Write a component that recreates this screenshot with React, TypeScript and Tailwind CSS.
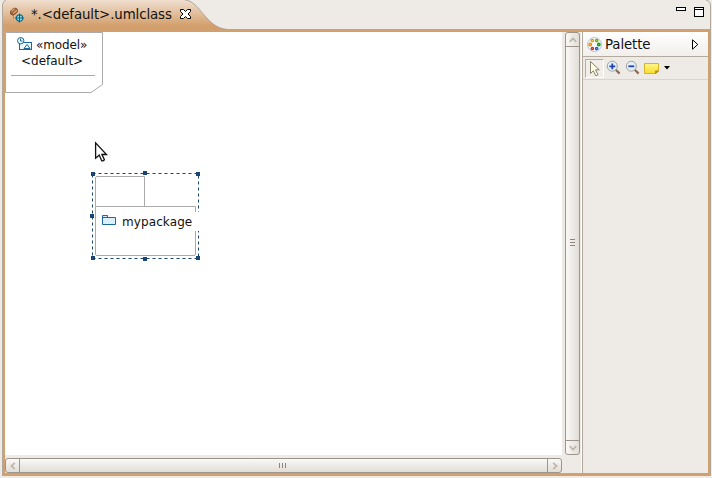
import React from "react";

function Chevron({ className = "" }: { className?: string }) {
  return (
    <svg className={className} width="8" height="8" viewBox="0 0 8 8" fill="none" stroke="#c0b7ac" strokeWidth="1.8">
      <path d="M.8 5.8 4 2.4 7.2 5.8" />
    </svg>
  );
}

function EditorIcon() {
  return (
    <svg width="16" height="16" viewBox="0 0 16 16" className="mt-[7px] shrink-0">
      <path d="M3.5 7V12" stroke="#b98a5e" />
      <ellipse cx="3.9" cy="4.6" rx="4.1" ry="2.8" transform="rotate(-38 3.9 4.6)" fill="#a9663a" stroke="#7d4925" strokeWidth=".8" />
      <path d="M1.6 4.2 4.6 1.6M3.4 6.4 7 3.2" stroke="#e3b088" strokeWidth="1.1" />
      <circle cx="9.5" cy="11" r="3.2" fill="#9fe0ea" stroke="#0a6f8a" strokeWidth="1.2" />
      <path d="M9.5 6.6v9M5 11h9" stroke="#0a6580" strokeWidth="1.1" />
    </svg>
  );
}

function Header() {
  return (
    <header className="relative flex h-[32px] w-full shrink-0">
      <svg className="absolute inset-0" width="712" height="32" viewBox="0 0 712 32">
        <defs>
          <linearGradient id="tab" x1="0" y1="0" x2="0" y2="1">
            <stop offset="0" stopColor="#f0dfd0" />
            <stop offset=".8" stopColor="#d3a06d" />
            <stop offset="1" stopColor="#d3a06d" />
          </linearGradient>
        </defs>
        <path d="M3 32V5Q3 1 7 0H186C199 1 207 28 227 29V32Z" fill="url(#tab)" />
        <path d="M2.5 32V5Q3 1 6 0M185 0C200 1 206 28 227 29.5H711" fill="none" stroke="#b1a79a" />
        <path d="M706 0Q710.5 1 710.5 6V32" fill="none" stroke="#b1a79a" />
        <path d="M3 30H710V32H3Z" fill="#d3a06d" />
      </svg>
      <div className="relative flex w-full pl-[10px]">
        <EditorIcon />
        <span className="ml-[5px] mt-[5px] w-[142px] whitespace-nowrap text-[13.33px] leading-[20px] tracking-[-0.09px]">*.&lt;default&gt;.umlclass</span>
        <svg width="11" height="10" viewBox="0 0 11 10" className="ml-[7px] mt-[9px] shrink-0">
          <path d="M.5.5h3l2 2 2-2h3v2l-2.5 2.5 2.5 2.5v2h-3l-2-2-2 2h-3v-2L3 5 .5 2.5Z" fill="white" stroke="black" />
        </svg>
        <div className="ml-auto mr-[8px] flex gap-[8px] pt-[7px]">
          <div className="h-[4px] w-[10px] border border-black bg-white" />
          <div className="h-[10px] w-[10px] border border-black bg-white pt-px">
            <div className="h-px bg-black" />
          </div>
        </div>
      </div>
    </header>
  );
}

function Canvas() {
  return (
    <main className="relative h-[423px] w-[557px] shrink-0 overflow-hidden bg-white">
      <svg className="absolute inset-0" width="557" height="423" viewBox="5 32 557 423">
        <path d="M5.5 32.5H102.5V84.5L91 92.5H5.5ZM11 75.5H95" fill="white" stroke="#aaa" />
        <g transform="translate(17 37)" fill="none" stroke="#1d6898">
          <rect x="2.5" y="5.5" width="12" height="7" fill="#edf8fc" />
          <circle cx="3.7" cy="3.7" r="3.2" fill="#edf8fc" />
          <path d="M3.5 1.5v2.5h2M7 11.5h6L10 7.5Z" />
        </g>
        <rect x="92.5" y="173.5" width="106" height="85" fill="none" stroke="#174575" strokeDasharray="3 3" />
        <path d="M95.5 206.5V178Q95.5 176.5 97 176.5H144.5V206.5M95.5 206.5H195.5V254Q195.5 255.5 194 255.5H97Q95.5 255.5 95.5 254V206.5" fill="white" stroke="#aaa" />
        <rect x="97" y="212" width="103" height="19" fill="white" />
        <path d="M102.5 224.5v-9h5v2h8v7Z" fill="#dceefa" stroke="#1d6898" />
        <path d="M103 217.5h5" stroke="#1d6898" />
        <path d="M91 172h4v4h-4ZM143 171h4v4h-4ZM196 172h4v4h-4ZM90 214h4v4h-4ZM91 256h4v4h-4ZM143 257h4v4h-4ZM196 256h4v4h-4Z" fill="#174575" />
        <path d="M96.3 144v15.5l3.7-3.3 2.6 5.6 3-1.4-2.6-5.4h4.6Z" fill="#bbb" opacity=".5" />
        <path d="M95.6 142.8v15.4l3.6-3.1 2.5 5.7q1.6.4 2.7-1.2l-2.5-5.1h4.6Z" fill="white" stroke="#111" strokeWidth="1.3" />
      </svg>
      <div className="absolute left-[31px] top-[5px] text-[12px] leading-[16px] tracking-[-0.12px]">«model»</div>
      <div className="absolute left-[16px] top-[21px] text-[12px] leading-[16px] tracking-[-0.02px]">&lt;default&gt;</div>
      <div className="absolute left-[117px] top-[182px] text-[12px] leading-[16px] tracking-[0.1px]">mypackage</div>
    </main>
  );
}

function VerticalScroll() {
  return (
    <div className="flex h-[423px] w-[15px] flex-col overflow-hidden rounded-[3px] border border-[#9d958c] bg-gradient-to-r from-[#faf9f7] to-[#e2ddd7]">
      <div className="flex h-[14px] shrink-0 items-center justify-center border-b border-[#9d958c]"><Chevron /></div>
      <div className="flex flex-1 flex-col items-center justify-center gap-[2px] pb-[2px]">
        <i className="h-px w-[5px] bg-[#8d857c]" /><i className="h-px w-[5px] bg-[#8d857c]" /><i className="h-px w-[5px] bg-[#8d857c]" />
      </div>
      <div className="flex h-[14px] shrink-0 items-center justify-center border-t border-[#9d958c]"><Chevron className="rotate-180" /></div>
    </div>
  );
}

function HorizontalScroll() {
  return (
    <div className="mt-[3px] flex h-[15px] w-[557px] overflow-hidden rounded-[3px] border border-[#9d958c] bg-gradient-to-b from-[#faf9f7] to-[#e2ddd7]">
      <div className="flex w-[14px] shrink-0 items-center justify-center border-r border-[#9d958c]"><Chevron className="-rotate-90" /></div>
      <div className="flex flex-1 items-center justify-center gap-[2px] pr-[2px]">
        <i className="h-[5px] w-px bg-[#8d857c]" /><i className="h-[5px] w-px bg-[#8d857c]" /><i className="h-[5px] w-px bg-[#8d857c]" />
      </div>
      <div className="flex w-[14px] shrink-0 items-center justify-center border-l border-[#9d958c]"><Chevron className="rotate-90" /></div>
    </div>
  );
}

function Magnifier({ plus = false }: { plus?: boolean }) {
  return (
    <svg width="16" height="16" viewBox="0 0 16 16" fill="none">
      <path d="m9.8 9.8 3.8 3.8" stroke="#8d6b55" strokeWidth="2.2" />
      <circle cx="6.3" cy="6.2" r="5" fill="#e2effa" stroke="#a3a39b" />
      <path d={plus ? "M3.4 6.3h5.8M6.3 3.4v5.8" : "M3.4 6.3h5.8"} stroke="#2440b0" strokeWidth="1.8" />
    </svg>
  );
}

function Palette() {
  return (
    <aside className="flex h-[441px] w-[127px] flex-col border-l border-[#b1a79a] bg-[#eeebe6]">
      <div className="flex h-[25px] w-full shrink-0 items-center border-b border-[#b5aa9e] bg-gradient-to-b from-white to-[#f2efec] pl-[4px]">
        <svg width="15" height="15" viewBox="0 0 15 15">
          <circle cx="7.5" cy="7.5" r="7" fill="#f4f9ff" stroke="#aac4e4" />
          <g strokeWidth="1.2">
            <circle cx="5.4" cy="3.5" r="1.2" fill="#ffe36b" stroke="#e59a00" /><circle cx="9.7" cy="3.5" r="1.2" fill="#cfe86a" stroke="#7aa300" />
            <circle cx="3.2" cy="7.5" r="1.3" fill="#ffc04a" stroke="#f08c00" /><circle cx="11.8" cy="7.5" r="1.3" fill="#5fd04a" stroke="#168f18" />
            <circle cx="5.4" cy="11.5" r="1.2" fill="#f57b6b" stroke="#d22f22" /><circle cx="9.7" cy="11.5" r="1.2" fill="#7eaaf0" stroke="#2457b8" />
          </g>
        </svg>
        <span className="ml-[3px] mt-px text-[13.33px] leading-[20px] tracking-[-0.1px]">Palette</span>
        <svg className="ml-auto mr-[9px]" width="7" height="11" viewBox="0 0 7 11"><path d="M.5.8v9.4L5.8 5.5Z" fill="white" stroke="black" /></svg>
      </div>
      <div className="flex h-[23px] shrink-0 items-center border-b border-[#dad4cc] pl-[2px]">
        <div className="flex h-[19px] w-[19px] items-center justify-center border border-[#b7afa5] border-b-white border-r-white bg-[#f1eeea]">
          <svg width="13" height="17" viewBox="0 0 13 17"><path d="M2.5 1.5v12l2.8-2.7 2.5 5 2.2-1-2.4-5h3.7Z" fill="#fffce1" stroke="#87856f" /></svg>
        </div>
        <div className="ml-[2px] flex gap-[3px]"><Magnifier plus /><Magnifier /></div>
        <svg className="ml-[3px]" width="16" height="13" viewBox="0 0 16 13">
          <defs><linearGradient id="note" x1="0" y1="0" x2="0" y2="1"><stop offset="0" stopColor="#fff68a" /><stop offset="1" stopColor="#f8dc2c" /></linearGradient></defs>
          <path d="M.5 1.5h14v7.5l-3 2.5H.5Z" fill="url(#note)" stroke="#d9b32b" />
          <path d="M11.5 11.5V9h3Z" fill="#b98a1c" stroke="#b38f1e" />
        </svg>
        <svg className="ml-[4px]" width="6" height="4" viewBox="0 0 6 4"><path d="M0 0h6L3 3.5Z" /></svg>
      </div>
    </aside>
  );
}

export default function App() {
  return (
    <div className="flex h-[478px] w-[712px] flex-col overflow-hidden bg-[#eeebe6] font-['DejaVu_Sans',sans-serif] text-[#111]">
      <Header />
      <div className="ml-[2px] flex h-[444px] w-[709px] shrink-0 border-x border-b border-[#b1a79a] bg-[#eeebe6]">
        <div className="flex w-full border-x-2 border-b-2 border-[#d3a06d]">
          <div><Canvas /><HorizontalScroll /></div>
          <div className="ml-[3px]"><VerticalScroll /></div>
          <div className="ml-[1px] w-px bg-white" />
          <Palette />
        </div>
      </div>
    </div>
  );
}
